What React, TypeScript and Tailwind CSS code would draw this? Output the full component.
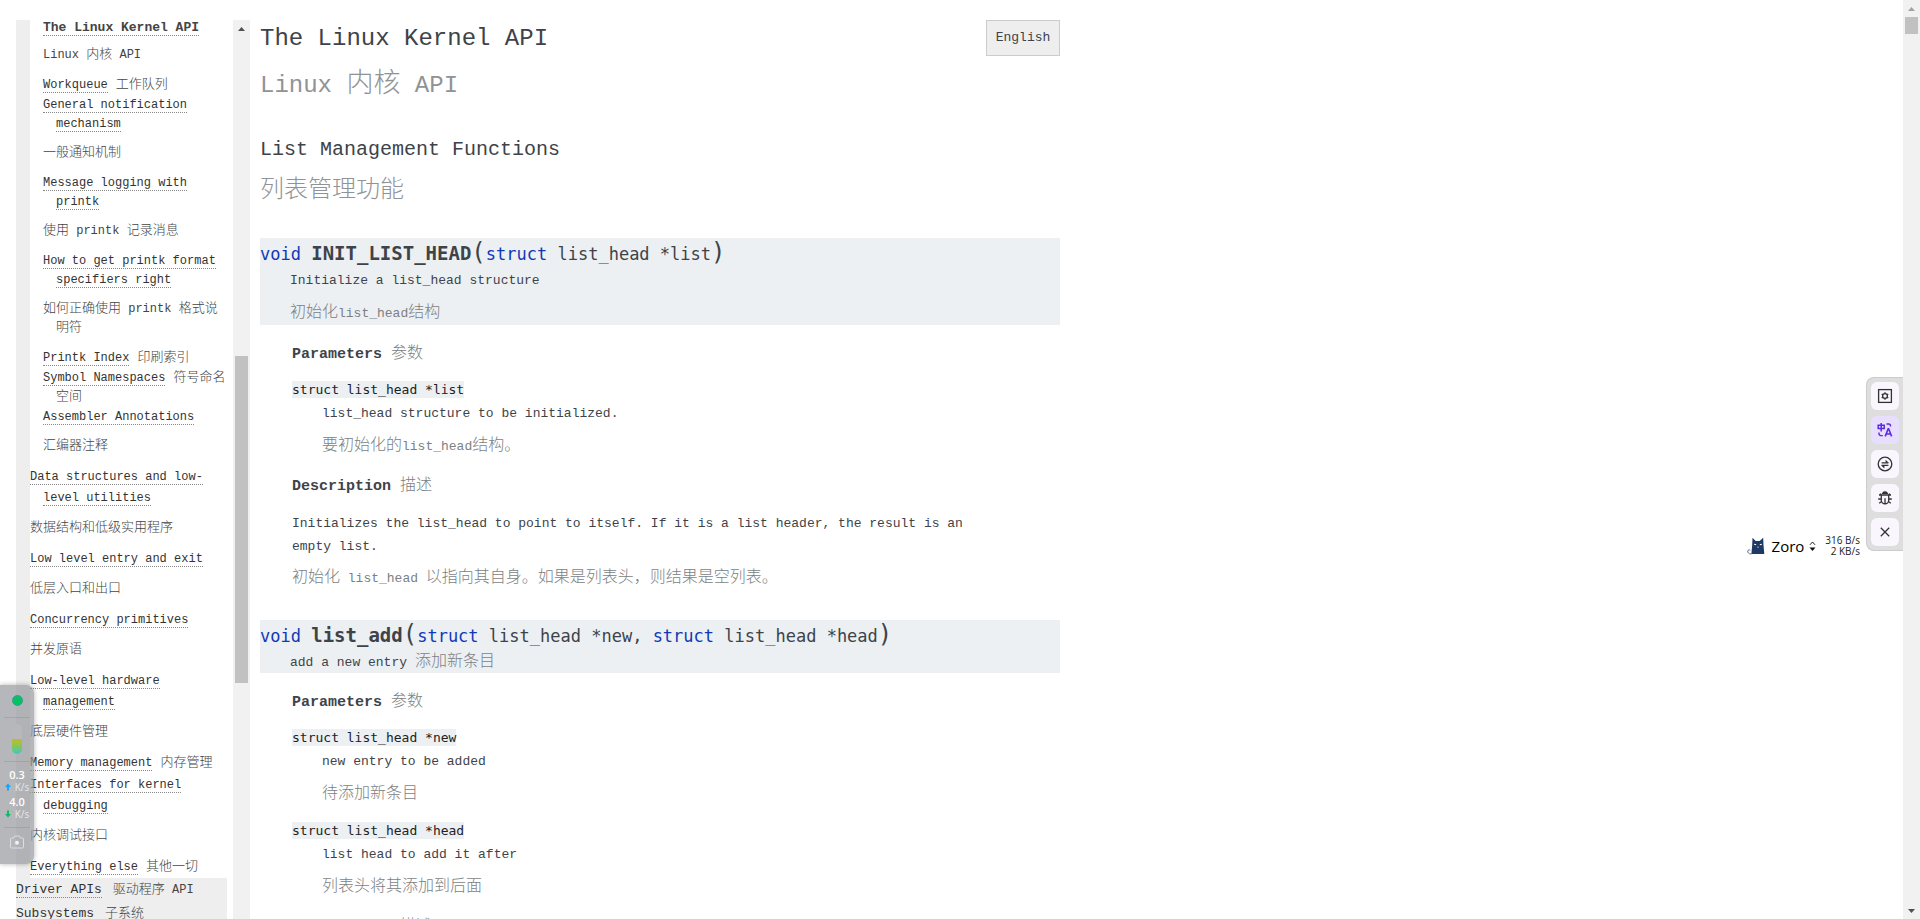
import type { ReactNode } from "react";

const BODY = "font-['Liberation_Mono','Noto_Sans_CJK_SC',monospace]";
const CODE = "font-['DejaVu_Sans_Mono',monospace]";

/* Sets Han runs in a larger size than the half-width Latin around them. */
function Zh({ text, size = "text-[16px]" }: { text: string; size?: string }) {
  const parts = text.split(/([\u3000-\u9fff\uff00-\uffef]+)/).filter(Boolean);
  return (
    <>
      {parts.map((p, i) => (
        <span
          key={i}
          className={
            /[\u3000-\u9fff\uff00-\uffef]/.test(p)
              ? `font-['Noto_Sans_CJK_SC',sans-serif] font-light leading-none ${size}`
              : ""
          }
        >
          {p}
        </span>
      ))}
    </>
  );
}

type Entry = { lines: string[]; inline?: string[]; block?: string[] };

const kernelApi: Entry[] = [
  { lines: ["Workqueue"], inline: ["工作队列"] },
  { lines: ["General notification", "mechanism"], block: ["一般通知机制"] },
  { lines: ["Message logging with", "printk"], block: ["使用 printk 记录消息"] },
  { lines: ["How to get printk format", "specifiers right"], block: ["如何正确使用 printk 格式说", "明符"] },
  { lines: ["Printk Index"], inline: ["印刷索引"] },
  { lines: ["Symbol Namespaces"], inline: ["符号命名", "空间"] },
  { lines: ["Assembler Annotations"], block: ["汇编器注释"] },
];

const coreApi: Entry[] = [
  { lines: ["Data structures and low-", "level utilities"], block: ["数据结构和低级实用程序"] },
  { lines: ["Low level entry and exit"], block: ["低层入口和出口"] },
  { lines: ["Concurrency primitives"], block: ["并发原语"] },
  { lines: ["Low-level hardware", "management"], block: ["底层硬件管理"] },
  { lines: ["Memory management"], inline: ["内存管理"] },
  { lines: ["Interfaces for kernel", "debugging"], block: ["内核调试接口"] },
  { lines: ["Everything else"], inline: ["其他一切"] },
];

function Lines({ lines }: { lines: string[] }) {
  return (
    <>
      {lines.map((l, i) => (
        <span key={l}>
          {i > 0 && <br />}
          <Zh text={l} size="text-[13px]" />
        </span>
      ))}
    </>
  );
}

function NavLink({ lines }: { lines: string[] }) {
  return (
    <a href="#nav">
      {lines.map((l, i) => (
        <span key={l}>
          {i > 0 && <br />}
          <span className="border-b border-dotted border-[#888]">{l}</span>
        </span>
      ))}
    </a>
  );
}

function NavItem({ entry, leading }: { entry: Entry; leading: string }) {
  return (
    <li className="mt-px pl-[13px] -indent-[13px] whitespace-nowrap">
      <div className={leading}>
        <NavLink lines={entry.lines} />
        {entry.inline && (
          <span className="ml-2 text-[#444]">
            <Lines lines={entry.inline} />
          </span>
        )}
      </div>
      {entry.block && (
        <div className="mt-[10px] mb-[11px] leading-[19px] text-[#444]">
          <Lines lines={entry.block} />
        </div>
      )}
    </li>
  );
}

function Arrow({ down = false, color = "#505050" }: { down?: boolean; color?: string }) {
  return (
    <svg width="17" height="17" viewBox="0 0 17 17" aria-hidden="true" className="shrink-0">
      <path d={down ? "M5 7h7l-3.5 4z" : "M5 11h7l-3.5-4z"} fill={color} />
    </svg>
  );
}

function Sidebar() {
  return (
    <aside className="flex w-[234px] shrink-0 overflow-hidden">
      <nav className="min-w-0 flex-1 overflow-hidden pr-[6px] text-[12px] text-[#333]">
        <div className="bg-[#eee] pl-[14px]">
          <div className="bg-white">
            <ul className="pl-[13px]">
              <li className="whitespace-nowrap">
                <div className="text-[13px] leading-[15px] font-bold text-[#444]">
                  <a href="#top" className="border-b border-dotted border-[#888]">
                    The Linux Kernel API
                  </a>
                </div>
                <div className="mt-[11px] mb-[11px] leading-[19px] text-[#444]">
                  <Zh text="Linux 内核 API" size="text-[13px]" />
                </div>
              </li>
              {kernelApi.map((e) => (
                <NavItem key={e.lines[0]} entry={e} leading="leading-[19px]" />
              ))}
            </ul>
            <ul>
              {coreApi.map((e) => (
                <NavItem key={e.lines[0]} entry={e} leading="leading-[21px]" />
              ))}
            </ul>
          </div>
        </div>
        <ul className="bg-[#eee] leading-[23px] whitespace-nowrap">
          <li>
            <a href="#driver" className="border-b border-dotted border-[#888] text-[13px]">
              Driver APIs
            </a>
            <span className="ml-[11px] text-[#444]">
              <Zh text="驱动程序 API" size="text-[13px]" />
            </span>
          </li>
          <li>
            <a href="#subsystems" className="border-b border-dotted border-[#888] text-[13px]">
              Subsystems
            </a>
            <span className="ml-[11px] text-[#444]">
              <Zh text="子系统" size="text-[13px]" />
            </span>
          </li>
        </ul>
      </nav>
      <div className="flex w-[17px] shrink-0 flex-col bg-[#f1f1f1]">
        <Arrow />
        <div className="mx-[2px] mt-[319px] h-[327px] shrink-0 bg-[#c1c1c1]" />
      </div>
    </aside>
  );
}

function Signature({ name, args }: { name: string; args: string[] }) {
  return (
    <div className={`h-[31px] text-[17px] leading-[30px] whitespace-nowrap ${CODE}`}>
      <span className="text-[#1039b8]">void</span> <b className="text-[19px]">{name}</b>
      <span className="text-[24px] leading-none">(</span>
      {args.map((a, i) => (
        <span key={a}>
          {i > 0 && ", "}
          <span className="text-[#1039b8]">struct</span> {a}
        </span>
      ))}
      <span className="text-[24px] leading-none">)</span>
    </div>
  );
}

function Label({ en, zh }: { en: string; zh: string }) {
  return (
    <p className="mt-4 leading-[24px]">
      <b className="text-[15px]">{en}</b>
      <span className="ml-[9px] text-[#7c7f83]">
        <Zh text={zh} />
      </span>
    </p>
  );
}

function Param({ code, en, zh }: { code: string; en: string; zh: string }) {
  return (
    <>
      <dt className="mt-[11px] h-6 leading-[24px]">
        <code className={`bg-[#ecf0f3] py-px text-[13px] text-[#222] ${CODE}`}>{code}</code>
      </dt>
      <dd className="pl-[30px] leading-[24px]">
        <p>{en}</p>
        <p className="mt-[9px] mb-3 text-[#7c7f83]">
          <Zh text={zh} />
        </p>
      </dd>
    </>
  );
}

function Article() {
  return (
    <main className="ml-[10px] w-full max-w-[800px] overflow-hidden text-[13px] text-[#3e4349]">
      <div className="flex items-start justify-between">
        <div>
          <h1 className="text-[24px] leading-[38px]">The Linux Kernel API</h1>
          <p className="mt-[9px] text-[24px] leading-[36px] text-[#909396]">
            <Zh text="Linux 内核 API" size="text-[27px]" />
          </p>
        </div>
        <button type="button" className="h-9 w-[74px] border border-[#ccc] bg-[#eee]">
          English
        </button>
      </div>
      <h2 className="mt-[31px] text-[20px] leading-[30px]">List Management Functions</h2>
      <p className="mt-[10px] leading-[32px] text-[#909396]">
        <Zh text="列表管理功能" size="text-[24px]" />
      </p>

      <section>
        <div className="mt-[28px] bg-[#ecf0f3]">
          <Signature name="INIT_LIST_HEAD" args={["list_head *list"]} />
          <div className="pl-[30px]">
            <p className="leading-[23px]">Initialize a list_head structure</p>
            <p className="mt-[10px] leading-[22px] text-[#7c7f83]">
              <Zh text="初始化list_head结构" />
            </p>
          </div>
        </div>
        <div className="pt-[2px] pl-[32px]">
          <Label en="Parameters" zh="参数" />
          <dl>
            <Param code="struct list_head *list" en="list_head structure to be initialized." zh="要初始化的list_head结构。" />
          </dl>
          <Label en="Description" zh="描述" />
          <p className="mt-[13px] leading-[23px]">
            Initializes the list_head to point to itself. If it is a list header, the result is an
            <br />
            empty list.
          </p>
          <p className="mt-[9px] leading-[24px] text-[#7c7f83]">
            <Zh text="初始化 list_head 以指向其自身。如果是列表头，则结果是空列表。" />
          </p>
        </div>
      </section>

      <section>
        <div className="mt-[29px] bg-[#ecf0f3]">
          <Signature name="list_add" args={["list_head *new", "list_head *head"]} />
          <p className="h-[22px] pl-[30px] leading-[24px]">
            add a new entry
            <span className="ml-2 text-[#7c7f83]">
              <Zh text="添加新条目" />
            </span>
          </p>
        </div>
        <div className="pt-[2px] pl-[32px]">
          <Label en="Parameters" zh="参数" />
          <dl>
            <Param code="struct list_head *new" en="new entry to be added" zh="待添加新条目" />
            <Param code="struct list_head *head" en="list head to add it after" zh="列表头将其添加到后面" />
          </dl>
          <Label en="Description" zh="描述" />
        </div>
      </section>
    </main>
  );
}

function ToolButton({ label, active = false, children }: { label: string; active?: boolean; children: ReactNode }) {
  return (
    <button
      type="button"
      aria-label={label}
      className={`flex size-7 items-center justify-center rounded-md ${
        active ? "bg-[#e8defd] text-[#5b2be0]" : "bg-[#f9f6fe] text-[#333]"
      }`}
    >
      <svg width="16" height="16" viewBox="0 0 16 16" fill="none" stroke="currentColor" strokeWidth="1.3">
        {children}
      </svg>
    </button>
  );
}

function TranslateDock() {
  return (
    <div className="absolute top-[377px] right-[17px] flex flex-col gap-[6px] rounded-l-lg border border-r-0 border-[#ccc] bg-[#dedede] p-1">
      <ToolButton label="Settings">
        <rect x="1.6" y="1.6" width="12.8" height="12.8" />
        <circle cx="8" cy="8" r="2.4" />
        <path d="M8 4.2v1.4M8 10.4v1.4M4.7 6.1l1.2.7M10.1 9.2l1.2.7M4.7 9.9l1.2-.7M10.1 6.8l1.2-.7" />
      </ToolButton>
      <ToolButton label="Translate" active>
        <path d="M1.2 3.2h6v3.4h-6zM4.2 1v8.4" strokeWidth="1.5" />
        <path d="M9.5 2h2.2a1.8 1.8 0 0 1 1.8 1.8v.8M2 10.6v1.2a1.8 1.8 0 0 0 1.8 1.8h2" strokeWidth="1.4" />
        <path d="M8.2 14.4l3-7.6h.4l3 7.6M9.2 12h4.4" strokeWidth="1.6" />
      </ToolButton>
      <ToolButton label="Switch">
        <circle cx="8" cy="8" r="6.8" />
        <path d="M4.6 6.8h6.8M11.4 9.4H4.6" />
        <path d="M8.6 3.8v3h3.2zM7.4 12.4v-3H4.2z" fill="currentColor" stroke="none" />
      </ToolButton>
      <ToolButton label="Report a bug">
        <path d="M5.6 3.4a2.5 2.2 0 0 1 4.8 0z" fill="currentColor" />
        <path d="M2 5h12M4.3 5v5.2a3.7 3.7 0 0 0 7.4 0V5M8 8.2v5M4.3 9H1.2M14.8 9h-3.1M4.6 11.4l-2.4 1.8M11.4 11.4l2.4 1.8M3 3.6L4.3 5M13 3.6L11.7 5" />
      </ToolButton>
      <ToolButton label="Close">
        <path d="M3.8 3.8l8.4 8.4M12.2 3.8l-8.4 8.4" />
      </ToolButton>
    </div>
  );
}

function ZoroBadge() {
  return (
    <div className="absolute top-[535px] right-[60px] flex items-center font-['Open_Sans',sans-serif] text-black">
      <svg width="18" height="18" viewBox="0 0 18 18" aria-hidden="true">
        <path d="M4.5 17C1.5 17 .6 15.4 .8 14c.3-1.5 2-1.6 2.4-.6" fill="none" stroke="#5d7390" />
        <path d="M4.4 17l.8-9L5.5 .8l3.2 3.1h4L16.2 .8l.3 7.2 .8 9z" fill="#1d3a66" />
        <path d="M7.2 7.2l2 .6M14.8 7.2l-2 .6" stroke="#fff" strokeWidth="1.1" />
        <path d="M10 9.8l1 .7 1-.7" fill="none" stroke="#cfd8e6" strokeWidth=".7" />
      </svg>
      <span className="ml-[7px] text-[15px] leading-[22px]">Zoro</span>
      <svg width="7" height="11" viewBox="0 0 7 11" aria-hidden="true" className="ml-[5px]">
        <path d="M1 3.8L3.5 1 6 3.8" fill="none" stroke="#222" />
        <path d="M.5 6.5h6L3.5 10z" fill="#111" />
      </svg>
      <div className="ml-[9px] text-right text-[10px] leading-[11px] text-[#222]">
        <div>316 B/s</div>
        <div>2 KB/s</div>
      </div>
    </div>
  );
}

function Speed({ value, up = false }: { value: string; up?: boolean }) {
  return (
    <div className="flex flex-col items-center">
      <span className="text-[11px] leading-[13px] font-semibold text-white">{value}</span>
      <span className="flex items-center gap-1 text-[10px] leading-[12px] text-[#e6e7e9]">
        <svg width="6" height="8" viewBox="0 0 6 8" aria-hidden="true">
          {up ? (
            <path d="M3 .5L6 4H4v3.5H2V4H0z" fill="#1aa3ff" />
          ) : (
            <path d="M3 7.5L0 4h2V.5h2V4h2z" fill="#0dbd63" />
          )}
        </svg>
        K/s
      </span>
    </div>
  );
}

function MonitorWidget() {
  return (
    <div className="absolute top-[685px] left-0 flex h-[179px] w-[34px] flex-col items-center rounded-r-lg bg-[#96989e]/70 font-['Open_Sans',sans-serif] shadow-[0_0_5px_rgba(0,0,0,0.3)]">
      <div className="mt-[10px] size-[11px] rounded-full border border-[#3c9a9c] bg-[#06c160]" />
      <div className="mt-[11px] h-px w-[26px] bg-[#8b8d92]/40" />
      <div className="mt-[6px] flex h-[30px] w-[10px] items-end overflow-hidden rounded-full bg-[#b7b8bc]">
        <div className="h-[15px] w-full bg-linear-to-b from-[#c8b81e] via-[#7cc95a] to-[#3cc5bd]" />
      </div>
      <div className="mt-[7px] h-px w-[26px] bg-[#8b8d92]/40" />
      <div className="mt-[6px] flex flex-col gap-[2px]">
        <Speed value="0.3" up />
        <Speed value="4.0" />
      </div>
      <div className="mt-[7px] h-px w-[26px] bg-[#8b8d92]/40" />
      <svg width="16" height="14" viewBox="0 0 16 14" aria-hidden="true" className="mt-[7px]">
        <path
          d="M2.5 3h2l1.2-2h4.6l1.2 2h2a1 1 0 0 1 1 1v8a1 1 0 0 1-1 1h-11a1 1 0 0 1-1-1V4a1 1 0 0 1 1-1z"
          fill="none"
          stroke="#dcdddf"
        />
        <circle cx="8" cy="7.8" r="2" fill="#f2f2f3" />
      </svg>
    </div>
  );
}

export default function App() {
  return (
    <div className={`relative flex h-screen overflow-hidden bg-white ${BODY}`}>
      <div className="flex min-w-0 flex-1 overflow-hidden pt-5 pl-4">
        <Sidebar />
        <Article />
      </div>
      <div className="flex w-[17px] shrink-0 flex-col bg-[#f1f1f1]">
        <Arrow color="#a3a3a3" />
        <div className="mx-[2px] h-[17px] bg-[#c1c1c1]" />
        <div className="flex-1" />
        <Arrow down />
      </div>
      <TranslateDock />
      <ZoroBadge />
      <MonitorWidget />
    </div>
  );
}
